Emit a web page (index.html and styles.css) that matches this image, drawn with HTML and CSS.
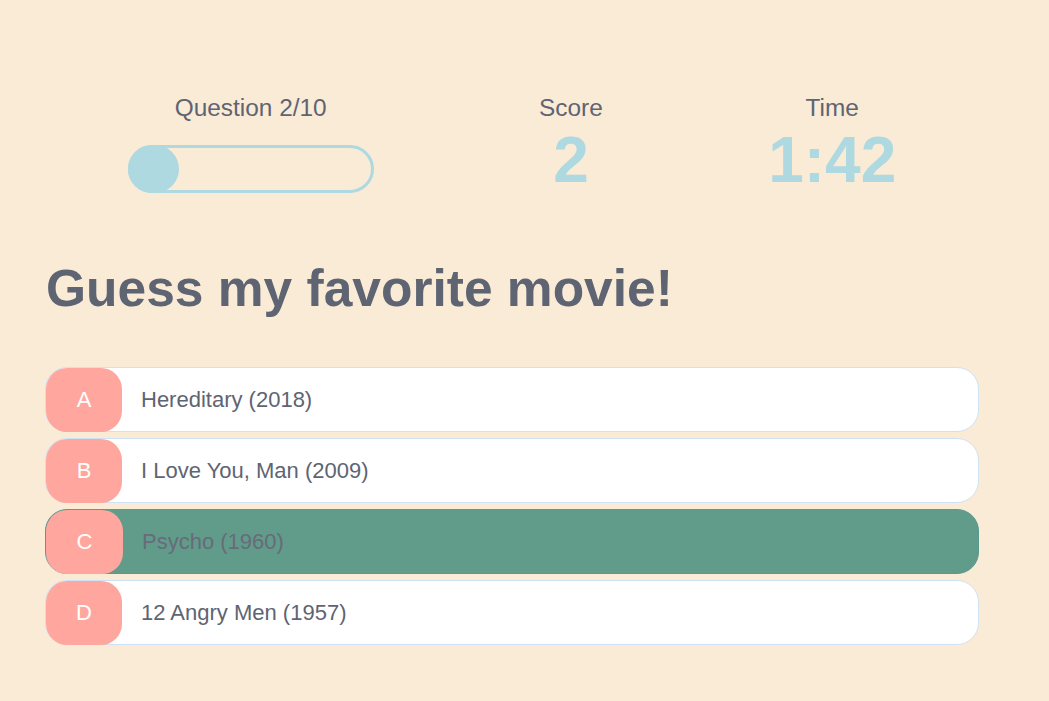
FILE: index.html
```html
<!DOCTYPE html>
<html lang="en">
<head>
<meta charset="utf-8">
<title>Quiz</title>
<link rel="stylesheet" href="styles.css">
</head>
<body>
<main class="quiz">
  <header class="hud">
    <div class="hud-item">
      <p class="hud-label">Question 2/10</p>
      <div class="progress"><div class="progress-fill"></div></div>
    </div>
    <div class="hud-item">
      <p class="hud-label">Score</p>
      <p class="hud-value">2</p>
    </div>
    <div class="hud-item">
      <p class="hud-label">Time</p>
      <p class="hud-value">1:42</p>
    </div>
  </header>
  <h1 class="question">Guess my favorite movie!</h1>
  <ul class="choices">
    <li class="choice"><span class="choice-letter">A</span><span class="choice-text">Hereditary (2018)</span></li>
    <li class="choice"><span class="choice-letter">B</span><span class="choice-text">I Love You, Man (2009)</span></li>
    <li class="choice choice-correct"><span class="choice-letter">C</span><span class="choice-text">Psycho (1960)</span></li>
    <li class="choice"><span class="choice-letter">D</span><span class="choice-text">12 Angry Men (1957)</span></li>
  </ul>
</main>
</body>
</html>
```
FILE: styles.css
```css
* { box-sizing: border-box; }
html, body {
  margin: 0;
  padding: 0;
  background: #faebd7;
}
body {
  font-family: "Liberation Sans", Arial, sans-serif;
  color: #5e6472;
}
.quiz {
  width: 934px;
  margin-left: 45px;
  padding-top: 94px;
}
.hud {
  display: flex;
  justify-content: space-around;
  align-items: flex-start;
}
.hud-item {
  display: flex;
  flex-direction: column;
  align-items: center;
}
.hud-label {
  margin: 0;
  font-size: 24.4px;
  line-height: 28px;
}
.hud-value {
  margin: 2px 0 0;
  font-size: 64px;
  font-weight: bold;
  line-height: 72px;
  color: #aed9e0;
}
.progress {
  margin-top: 23px;
  width: 246px;
  height: 48px;
  border: 3px solid #aed9e0;
  border-radius: 24px;
  display: flex;
  align-items: center;
}
.progress-fill {
  flex: none;
  width: 51px;
  height: 48px;
  margin-left: -3px;
  border-radius: 24px;
  background: #aed9e0;
}
.question {
  margin: 60px 0 0 1px;
  font-size: 51.5px;
  line-height: 64px;
  font-weight: bold;
  color: #5e6472;
}
.choices {
  list-style: none;
  margin: 47px 0 0;
  padding: 0;
  display: flex;
  flex-direction: column;
  gap: 6px;
}
.choice {
  display: flex;
  align-items: center;
  height: 65px;
  background: #ffffff;
  border: 1px solid #cfe2f5;
  border-radius: 22px;
}
.choice-letter {
  width: 76px;
  height: 64px;
  display: flex;
  align-items: center;
  justify-content: center;
  background: #ffa69e;
  color: #ffffff;
  font-size: 22px;
  border-radius: 21px;
}
.choice-text {
  margin-left: 19px;
  font-size: 22px;
}
.choice-correct {
  background: #619b8a;
  border-color: #5a9891;
}
.choice-correct .choice-letter {
  width: 77px;
}
.choice-correct .choice-text {
  color: #676b7a;
}
```
